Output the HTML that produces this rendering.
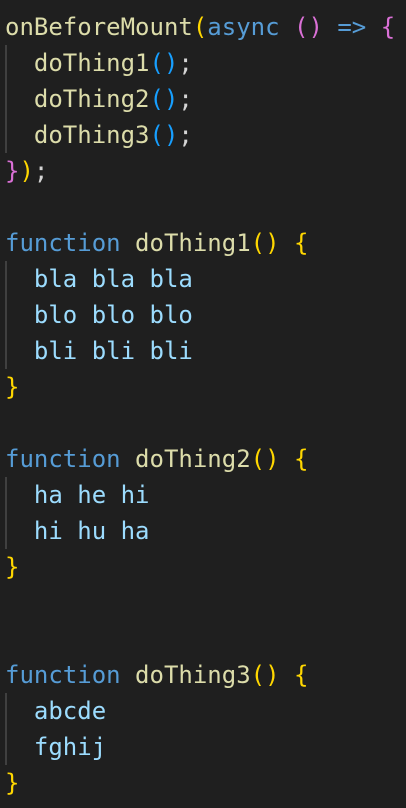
<!DOCTYPE html>
<html><head><style>
html,body{margin:0;padding:0;background:#1f1f1f;width:406px;height:808px;overflow:hidden}
pre{margin:0;position:absolute;left:5px;top:9px;font-family:"DejaVu Sans Mono","Liberation Mono",monospace;font-size:24px;line-height:36px;color:#d4d4d4}
.y{color:#dcdcaa}.b{color:#569cd6}.p{color:#da70d6}.g{color:#ffd700}.c{color:#179fff}.v{color:#9cdcfe}
.guide{position:absolute;left:5px;width:2px;background:#404040}
</style></head><body>
<div class="guide" style="top:45px;height:108px"></div>
<div class="guide" style="top:261px;height:108px"></div>
<div class="guide" style="top:477px;height:72px"></div>
<div class="guide" style="top:693px;height:72px"></div>
<pre><span class="y">onBeforeMount</span><span class="g">(</span><span class="b">async</span> <span class="p">()</span> <span class="b">=&gt;</span> <span class="p">{</span>
  <span class="y">doThing1</span><span class="c">()</span>;
  <span class="y">doThing2</span><span class="c">()</span>;
  <span class="y">doThing3</span><span class="c">()</span>;
<span class="p">}</span><span class="g">)</span>;

<span class="b">function</span> <span class="y">doThing1</span><span class="g">()</span> <span class="g">{</span>
  <span class="v">bla bla bla</span>
  <span class="v">blo blo blo</span>
  <span class="v">bli bli bli</span>
<span class="g">}</span>

<span class="b">function</span> <span class="y">doThing2</span><span class="g">()</span> <span class="g">{</span>
  <span class="v">ha he hi</span>
  <span class="v">hi hu ha</span>
<span class="g">}</span>


<span class="b">function</span> <span class="y">doThing3</span><span class="g">()</span> <span class="g">{</span>
  <span class="v">abcde</span>
  <span class="v">fghij</span>
<span class="g">}</span></pre>
</body></html>
